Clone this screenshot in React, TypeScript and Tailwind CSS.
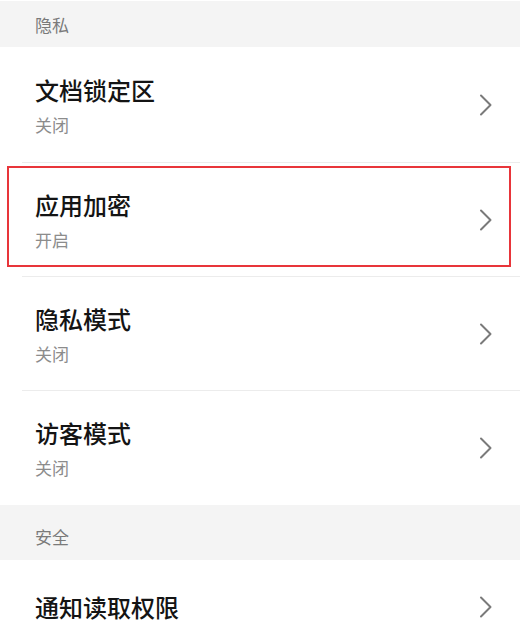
const font = { fontFamily: '"Noto Sans CJK SC", "Noto Sans", sans-serif' };

interface Item {
  title: string;
  status: string;
  highlight?: boolean;
}

const privacyItems: Item[] = [
  { title: '文档锁定区', status: '关闭' },
  { title: '应用加密', status: '开启', highlight: true },
  { title: '隐私模式', status: '关闭' },
  { title: '访客模式', status: '关闭' },
];

function Chevron() {
  return (
    <svg width="14" height="22" viewBox="0 0 14 22" fill="none" className="shrink-0">
      <path d="M2 1.5 L11.5 11 L2 20.5" stroke="#7a7a7a" strokeWidth="2" strokeLinecap="round" strokeLinejoin="round" />
    </svg>
  );
}

function Row({ item, divider, first }: { item: Item; divider: boolean; first: boolean }) {
  return (
    <div className={`relative ${first ? 'h-[116px]' : 'h-[114px]'} flex items-center pl-[35px] pr-[27px]`}>
      <div className="flex-1 flex flex-col">
        <span className="text-[24px] leading-[32px] font-medium text-[#141414]">{item.title}</span>
        <span className="mt-[7px] text-[17px] leading-[24px] text-[#8c8c8c]">{item.status}</span>
      </div>
      <Chevron />
      {divider && <div className="absolute left-[22px] right-0 bottom-0 h-px bg-[#ececec]" />}
      {/* red annotation box */}
      {item.highlight && (
        <div className="absolute left-[7px] right-[9px] top-[3px] bottom-[10px] border-2 border-[#e8353a]" />
      )}
    </div>
  );
}

export default function App() {
  return (
    <div className="w-[520px] h-[636px] overflow-hidden bg-white" style={font}>
      <div className="h-px bg-white" />
      <div className="h-[46px] bg-[#f4f4f4] pl-[35px] pt-[12px] text-[17px] leading-[24px] text-[#7a7a7a]">隐私</div>
      {privacyItems.map((item, i) => (
        <Row key={item.title} item={item} first={i === 0} divider={i < privacyItems.length - 1} />
      ))}
      <div className="h-[55px] bg-[#f4f4f4] pl-[35px] pt-[20px] text-[17px] leading-[24px] text-[#7a7a7a]">安全</div>
      <div className="flex items-center pl-[35px] pr-[27px] pt-[31px]">
        <span className="flex-1 text-[24px] leading-[32px] font-medium text-[#141414]">通知读取权限</span>
        <Chevron />
      </div>
    </div>
  );
}
